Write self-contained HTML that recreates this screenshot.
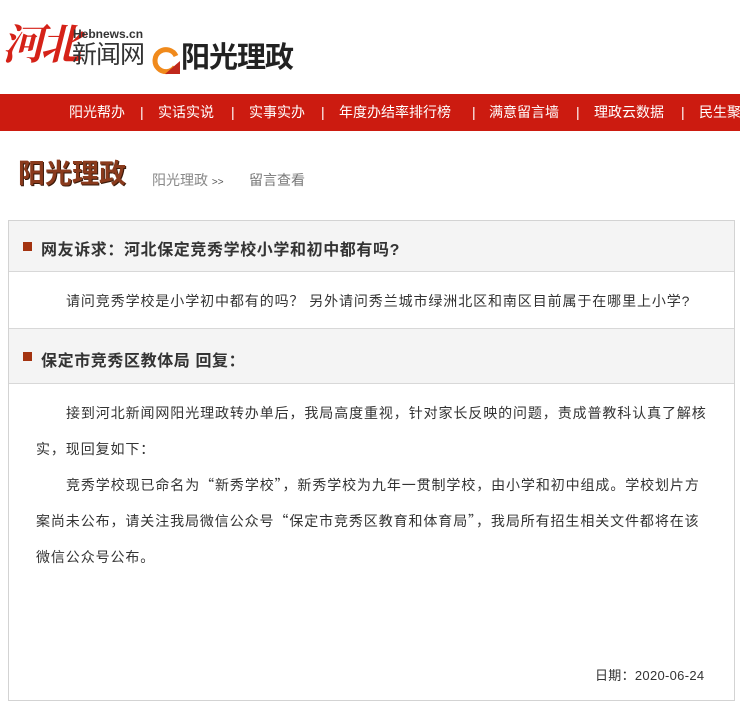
<!DOCTYPE html>
<html><head><meta charset="utf-8"><style>
*{margin:0;padding:0;box-sizing:border-box}
body{width:740px;height:705px;overflow:hidden;background:#fff;font-family:"Liberation Sans","Noto Sans CJK SC",sans-serif;position:relative;color:#333}
.a{position:absolute;white-space:nowrap}
.nav{position:absolute;left:0;top:94px;width:740px;height:37px;background:#cc1b10;overflow:hidden}
.nav span{position:absolute;top:9px;color:#fff;font-size:14px;line-height:18px;white-space:nowrap}
.box{position:absolute;left:8px;top:220px;width:727px;height:481px;border:1px solid #d3d3d3}
.h{position:absolute;left:0;width:725px;background:#f4f4f4;border-bottom:1px solid #d8d8d8}
.h b{position:absolute;left:32px;font-size:16px;color:#333;letter-spacing:0.6px;white-space:nowrap}
.h i{position:absolute;left:14px;width:9px;height:9px;background:#a33310}
.p{position:absolute;font-size:14px;color:#333;letter-spacing:0.9px}
.q{font-family:"Noto Sans CJK SC",sans-serif}
</style></head><body>
<div class="a" style="left:2px;top:18px;font-size:42px;font-weight:bold;color:#d52218;font-family:'Liberation Serif','Noto Serif CJK SC',serif;font-style:italic;letter-spacing:-4px;line-height:56px">河北</div>
<div class="a" style="left:73px;top:27px;font-size:12px;color:#333;font-weight:bold">Hebnews.cn</div>
<div class="a" style="left:72px;top:40px;font-size:25px;color:#333;line-height:30px;letter-spacing:-1px">新闻网</div>
<svg class="a" style="left:151px;top:47px" width="30" height="28" viewBox="0 0 30 28"><path d="M24 20 A11 11 0 1 1 25 9" stroke="#f08a1c" stroke-width="5" fill="none"/><path d="M14 27 L29 27 L29 14 Z" fill="#c0281c"/></svg>
<div class="a" style="left:181px;top:40px;font-size:29px;font-weight:bold;color:#222;line-height:36px;letter-spacing:-1px">阳光理政</div>
<div class="nav">
<span style="left:69px">阳光帮办</span><span style="left:140px">|</span>
<span style="left:158px">实话实说</span><span style="left:231px">|</span>
<span style="left:249px">实事实办</span><span style="left:321px">|</span>
<span style="left:339px">年度办结率排行榜</span><span style="left:472px">|</span>
<span style="left:489px">满意留言墙</span><span style="left:576px">|</span>
<span style="left:594px">理政云数据</span><span style="left:681px">|</span>
<span style="left:699px">民生聚焦</span>
</div>
<div class="a" style="left:18px;top:157px;font-size:27px;font-weight:bold;color:#8a3a1c;line-height:34px;text-shadow:1px 1px 0 #3a1a0a">阳光理政</div>
<div class="a" style="left:152px;top:170px;font-size:14px;color:#888">阳光理政 <span style="font-size:10px;color:#555">&gt;&gt;</span></div>
<div class="a" style="left:249px;top:170px;font-size:14px;color:#777">留言查看</div>
<div class="box">
<div class="h" style="top:0;height:51px"><i style="top:21px"></i><b style="top:15px">网友诉求：河北保定竞秀学校小学和初中都有吗?</b></div>
<div class="p" style="left:57px;top:70px;white-space:nowrap">请问竞秀学校是小学初中都有的吗？ 另外请问秀兰城市绿洲北区和南区目前属于在哪里上小学?</div>
<div class="h" style="top:107px;height:56px;border-top:1px solid #d8d8d8"><i style="top:23px"></i><b style="top:18px">保定市竞秀区教体局 回复：</b></div>
<div class="p" style="left:27px;top:174px;width:672px;line-height:36px;text-indent:30px">接到河北新闻网阳光理政转办单后，我局高度重视，针对家长反映的问题，责成普教科认真了解核实，现回复如下：</div>
<div class="p" style="left:27px;top:246px;width:672px;line-height:36px;text-indent:30px">竞秀学校现已命名为<span class="q">“</span>新秀学校<span class="q">”</span>，新秀学校为九年一贯制学校，由小学和初中组成。学校划片方案尚未公布，请关注我局微信公众号<span class="q">“</span>保定市竞秀区教育和体育局<span class="q">”</span>，我局所有招生相关文件都将在该微信公众号公布。</div>
<div class="p" style="left:586px;top:444px;font-size:13px;letter-spacing:0.3px">日期：2020-06-24</div>
</div>
</body></html>
